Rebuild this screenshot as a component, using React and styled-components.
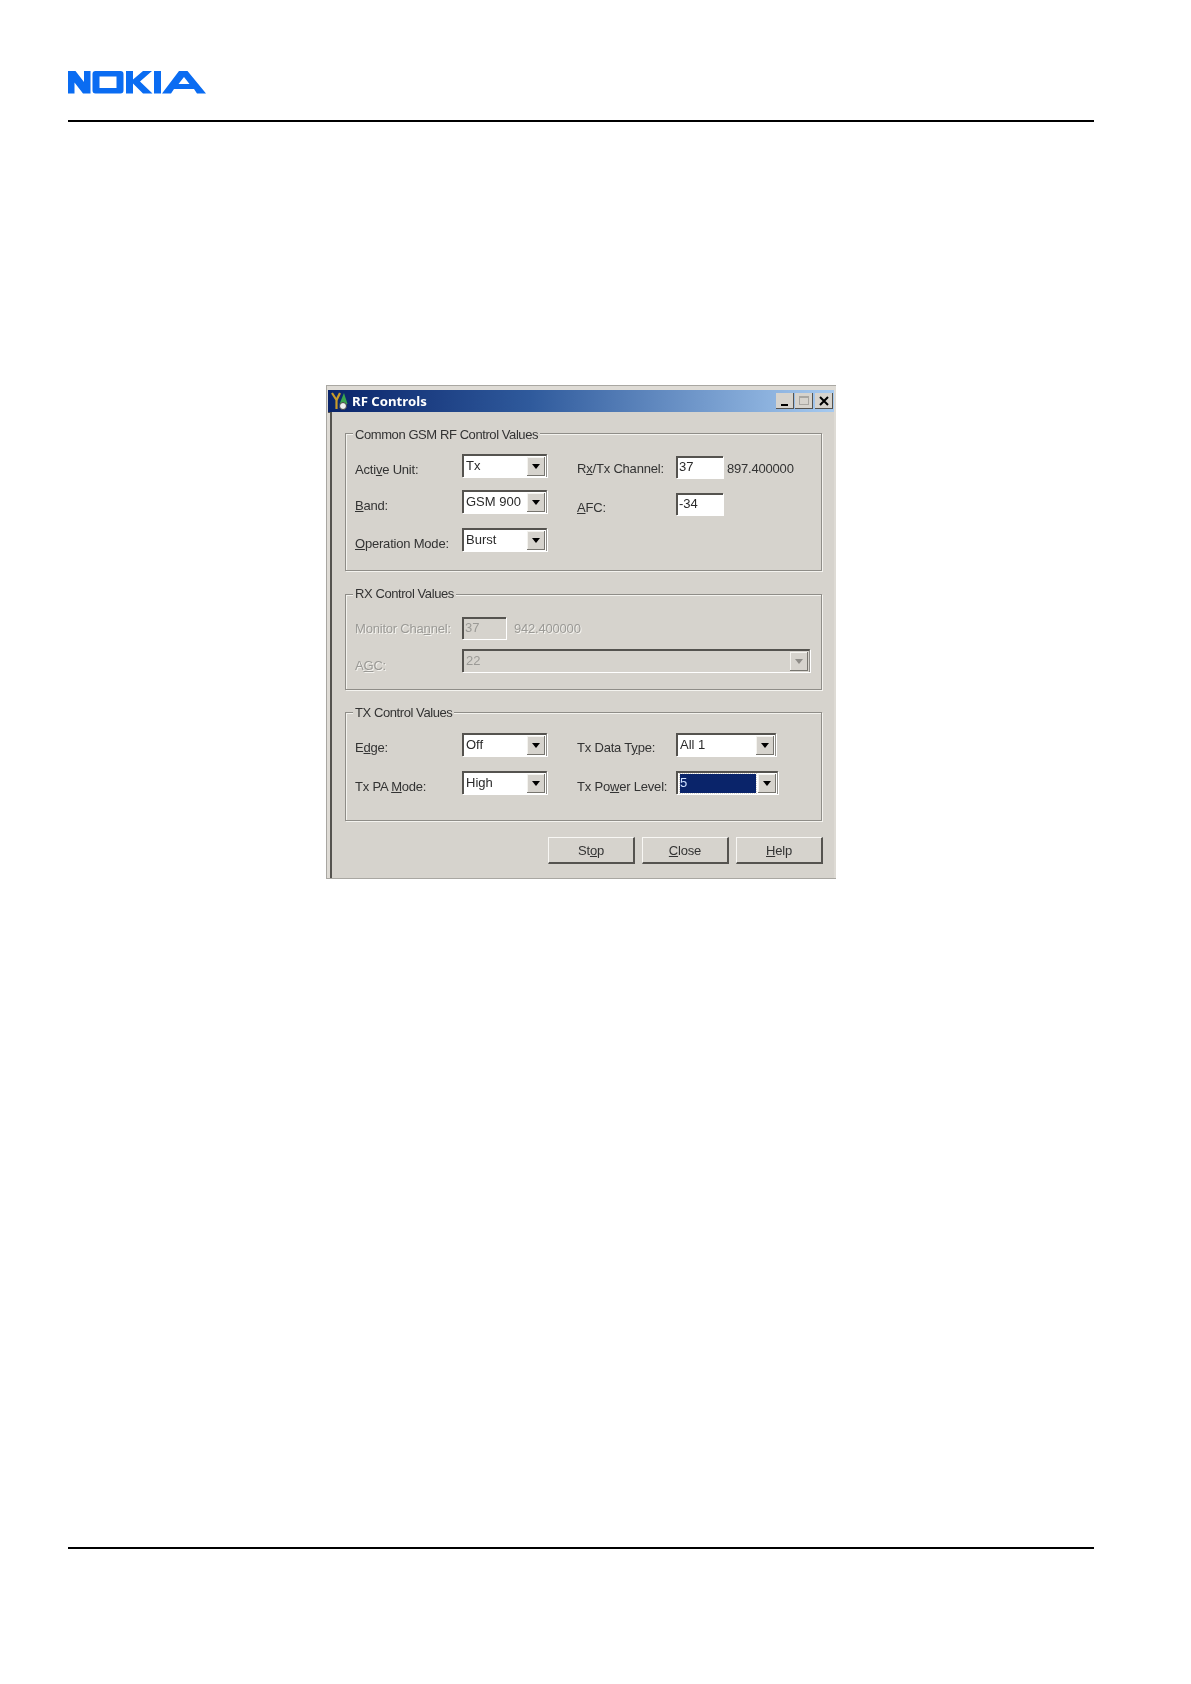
import React from 'react';
import styled, { createGlobalStyle } from 'styled-components';

const Global = createGlobalStyle`
  html, body { margin: 0; padding: 0; background: #fff; }
  body { font-family: "Liberation Sans", Arial, sans-serif; }
`;

const Page = styled.div`
  width: 1191px;
  min-height: 1684px;
  box-sizing: border-box;
  padding: 71px 97px 0 68px;
`;

const Logo = styled.svg`
  display: block;
  width: 138px;
  height: 23px;
  fill: #0a6cf2;
`;

const Rule = styled.div`
  height: 2px;
  background: #000;
  margin-top: ${props => props.$top}px;
`;

const Frame = styled.div`
  width: 510px;
  box-sizing: border-box;
  margin: 263px 0 0 258px;
  padding: 4px 2px 0 1px;
  background: #dedbd5;
  border: 1px solid #a9a7a2;
  border-right: none;
  filter: blur(0.4px);
  color: #333;
  font-size: 13px;
`;

const TitleBar = styled.div`
  height: 22px;
  display: flex;
  align-items: center;
  padding: 0 1px 0 2px;
  background: linear-gradient(90deg, #0a246a 0%, #2f5a9c 40%, #a6caf0 100%);
  box-shadow: 0 1px 0 #55534f;
`;

const AppIcon = styled.svg`
  width: 20px;
  height: 20px;
  flex: none;
`;

const Title = styled.span`
  margin-left: 2px;
  flex: 1;
  color: #fff;
  font-family: "Noto Sans", "Open Sans", sans-serif;
  font-weight: 700;
  font-size: 13.2px;
`;

const WinButton = styled.div`
  width: 18px;
  height: 16px;
  margin-left: ${props => props.$gap || 1}px;
  background: #d6d3cd;
  box-sizing: border-box;
  border-right: 1px solid #55534f;
  border-bottom: 1px solid #55534f;
  display: flex;
  align-items: center;
  justify-content: center;
`;

const MinGlyph = styled.div`
  width: 7px;
  height: 2px;
  background: #000;
  margin-top: 8px;
`;

const MaxGlyph = styled.div`
  width: 10px;
  height: 9px;
  box-sizing: border-box;
  border: 1px solid #a8a6a1;
  border-top-width: 2px;
`;

const Body = styled.div`
  margin-left: 2px;
  background: #d6d3cd;
  border-left: 2px solid #55534f;
  padding: 21px 12px 14px 13px;
`;

const Group = styled.section`
  position: relative;
  border: 1px solid #8f8d88;
  box-shadow: 1px 1px 0 #f4f3ef, inset 1px 1px 0 #f4f3ef;
  box-sizing: border-box;
  height: ${props => props.$height}px;
  margin-bottom: ${props => props.$gap || 0}px;
  padding: ${props => props.$pad}px 0 0 9px;
`;

const Legend = styled.span`
  position: absolute;
  top: ${props => props.$top}px;
  left: 7px;
  padding: 0 2px;
  line-height: 16px;
  background: #d6d3cd;
  color: #333;
  letter-spacing: -0.42px;
`;

const FormGrid = styled.div`
  display: grid;
  grid-template-columns: 107px 115px 99px 1fr;
  grid-template-rows: ${props => props.$rows};
`;

const Label = styled.label`
  line-height: 16px;
  margin-top: ${props => (props.$top === undefined ? 8 : props.$top)}px;
  white-space: nowrap;
  letter-spacing: -0.2px;
  color: ${props => (props.$off ? '#9b9a96' : '#333')};
  text-shadow: ${props => (props.$off ? '1px 1px 0 #f4f3ef' : 'none')};
`;

const Sunken = styled.div`
  box-sizing: border-box;
  border-top: 2px solid #55534f;
  border-left: 2px solid #55534f;
  box-shadow: 1px 1px 0 #fff;
  background: ${props => (props.$off ? '#d6d3cd' : '#fff')};
  color: ${props => (props.$off ? '#9b9a96' : '#2a2a2a')};
`;

const Input = styled(Sunken)`
  width: ${props => props.$width || 47}px;
  height: 22px;
  margin-top: ${props => props.$top || 0}px;
  padding-left: 1px;
  line-height: 17px;
`;

const Combo = styled(Sunken)`
  width: ${props => (props.$width ? `${props.$width}px` : '85px')};
  height: 23px;
  display: flex;
  padding: 1px 1px 1px 2px;
  border-right: 1px solid #8f8d88;
`;

const ComboValue = styled.div`
  flex: 1;
  line-height: 17px;
  margin-right: 2px;
  background: ${props => (props.$selected ? '#0a246a' : 'transparent')};
  color: ${props => (props.$selected ? '#cfe0ff' : 'inherit')};
  outline: ${props => (props.$selected ? '1px dotted #d6d3cd' : 'none')};
`;

const Arrow = styled.div`
  width: 18px;
  flex: none;
  box-sizing: border-box;
  background: #d6d3cd;
  border-right: 1px solid #77756f;
  border-bottom: 1px solid #77756f;
  box-shadow: inset 1px 1px 0 #f4f3ef;
  display: flex;
  align-items: center;
  justify-content: center;

  &:after {
    content: "";
    border-style: solid;
    border-width: 5px 4.5px 0 4.5px;
    border-color: ${props => (props.$off ? '#8f8d88' : '#000')} transparent transparent transparent;
  }
`;

const ValueText = styled.span`
  line-height: 16px;
  letter-spacing: -0.2px;
  margin: ${props => props.$top || 0}px 0 0 ${props => props.$left || 0}px;
  color: ${props => (props.$off ? '#9b9a96' : '#333')};
  text-shadow: ${props => (props.$off ? '1px 1px 0 #f4f3ef' : 'none')};
`;

const Inline = styled.div`
  display: flex;
  align-items: flex-start;
`;

const Wide = styled.div`
  grid-column: 2 / span 3;
`;

const Actions = styled.div`
  display: flex;
  justify-content: flex-end;
  gap: 7px;
  margin: 16px -1px 0 0;
`;

const PushButton = styled.button`
  width: 87px;
  height: 27px;
  padding: 0;
  font: inherit;
  color: #333;
  background: #d6d3cd;
  border: none;
  border-top: 1px solid #f8f7f4;
  border-left: 1px solid #f8f7f4;
  border-right: 2px solid #55534f;
  border-bottom: 2px solid #55534f;
  letter-spacing: -0.2px;
`;

const NokiaLogo = () => (
  <Logo viewBox="0 0 138 23" role="img" aria-label="NOKIA">
    <path d="M0 0h7.500L16 11V0h6.500v22.500H15L6.500 11.500v11H0z" />
    <path fillRule="evenodd" d="M24.500 3q0-3 3-3h25q3 0 3 3v16.500q0 3-3 3h-25q-3 0-3-3zM31.500 5.500v11.500h17V5.500z" />
    <path d="M58 0h7v8.500L75 0h9L72 10.500l12.500 12H75l-10-10v10h-7z" />
    <path d="M86 0h7v22.500h-7z" />
    <path fillRule="evenodd" d="M111 0h8.500L138 22.500h-9l-3-4.500h-20l-3 4.500h-9zM110.500 13h11L116 6z" />
  </Logo>
);

const RfIcon = () => (
  <AppIcon viewBox="0 0 20 20">
    <path d="M2 2l4.500 7v9" fill="none" stroke="#c89a2a" strokeWidth="2.200" />
    <path d="M10 2L6.500 9" fill="none" stroke="#c89a2a" strokeWidth="2.200" />
    <path d="M14 2l-4.500 11h8z" fill="#3aa64e" />
    <circle cx="13" cy="15" r="3.500" fill="#f0f0f0" stroke="#444" />
  </AppIcon>
);

const CloseGlyph = () => (
  <svg width="12" height="10" viewBox="0 0 12 10">
    <path d="M2 1l8 8M10 1L2 9" stroke="#000" strokeWidth="2" />
  </svg>
);

const Select = ({ value, width, selected, off }) => (
  <Combo $width={width} $off={off}>
    <ComboValue $selected={selected}>{value}</ComboValue>
    <Arrow $off={off} />
  </Combo>
);

const App = () => (
  <Page>
    <Global />
    <NokiaLogo />
    <Rule $top={26} />
    <Frame>
      <TitleBar>
        <RfIcon />
        <Title>RF Controls</Title>
        <WinButton><MinGlyph /></WinButton>
        <WinButton><MaxGlyph /></WinButton>
        <WinButton $gap={2}><CloseGlyph /></WinButton>
      </TitleBar>
      <Body>
        <Group $height={138} $gap={23} $pad={20}>
          <Legend $top={-7}>Common GSM RF Control Values</Legend>
          <FormGrid $rows="36px 38px 23px">
            <Label>Acti<u>v</u>e Unit:</Label>
            <Select value="Tx" />
            <Label $top={7}>R<u>x</u>/Tx Channel:</Label>
            <Inline>
              <Input $top={2}>37</Input>
              <ValueText $top={7} $left={4}>897.400000</ValueText>
            </Inline>

            <Label><u>B</u>and:</Label>
            <Select value="GSM 900" />
            <Label $top={10}><u>A</u>FC:</Label>
            <Input $top={3}>-34</Input>

            <Label><u>O</u>peration Mode:</Label>
            <Select value="Burst" />
          </FormGrid>
        </Group>

        <Group $height={96} $gap={22} $pad={22}>
          <Legend $top={-9}>RX Control Values</Legend>
          <FormGrid $rows="32px 24px">
            <Label $off $top={4}>Monitor Cha<u>n</u>nel:</Label>
            <Wide>
              <Inline>
                <Input $off $width={44}>37</Input>
                <ValueText $off $top={4} $left={8}>942.400000</ValueText>
              </Inline>
            </Wide>

            <Label $off $top={9}>A<u>G</u>C:</Label>
            <Wide>
              <Select value="22" width={348} off />
            </Wide>
          </FormGrid>
        </Group>

        <Group $height={109} $pad={20}>
          <Legend $top={-8}>TX Control Values</Legend>
          <FormGrid $rows="38px 24px">
            <Label $top={7}>E<u>d</u>ge:</Label>
            <Select value="Off" />
            <Label $top={7}>Tx Data T<u>y</u>pe:</Label>
            <Select value="All 1" width={100} />

            <Label>Tx PA <u>M</u>ode:</Label>
            <Select value="High" />
            <Label>Tx Po<u>w</u>er Level:</Label>
            <Select value="5" width={102} selected />
          </FormGrid>
        </Group>

        <Actions>
          <PushButton type="button">St<u>o</u>p</PushButton>
          <PushButton type="button"><u>C</u>lose</PushButton>
          <PushButton type="button"><u>H</u>elp</PushButton>
        </Actions>
      </Body>
    </Frame>
    <Rule $top={668} />
  </Page>
);

export default App;
